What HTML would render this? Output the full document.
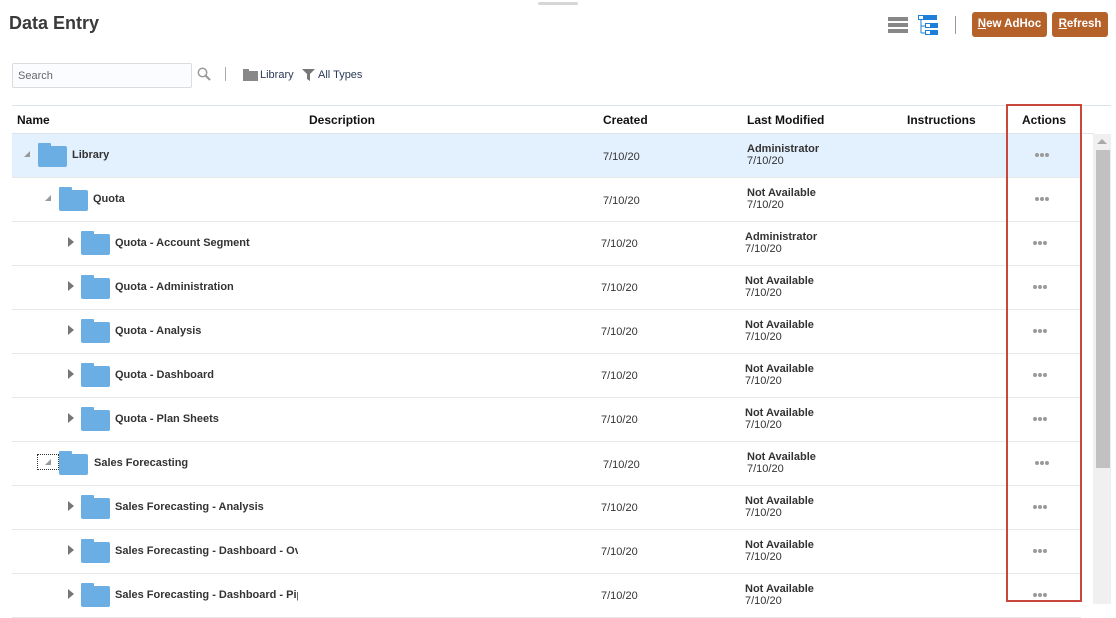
<!DOCTYPE html>
<html><head><meta charset="utf-8"><style>
*{margin:0;padding:0;box-sizing:border-box}
body{width:1116px;height:604px;overflow:hidden;background:#fff;font-family:"Liberation Sans",Arial,sans-serif;color:#333;position:relative}
.a{position:absolute}
.row{position:absolute;left:12px;width:1069px;height:44px;border-bottom:1px solid #e8e8e8}
.nm{position:absolute;font-size:11px;font-weight:bold;color:#333;white-space:nowrap;overflow:hidden}
.fd{position:absolute;width:29px;height:24px}
.fd i{position:absolute;left:0;top:0;width:13px;height:4px;background:#6aaee3;border-radius:1px 1px 0 0}
.fd b{position:absolute;left:0;top:3px;width:29px;height:21px;background:#6aaee3;border-radius:2px}
.cr{position:absolute;font-size:11px;color:#333}
.lm{position:absolute;font-size:11px;line-height:12px;color:#333}
.lm span{font-weight:bold;display:block}
.dots{position:absolute;width:18px;height:4px}
.dots::before{content:"";position:absolute;left:0;top:0;width:4px;height:4px;border-radius:2px;background:#9a9a9a;box-shadow:5px 0 0 #9a9a9a,10px 0 0 #9a9a9a}
.tri{position:absolute;width:0;height:0}
.tr{border-top:5px solid transparent;border-bottom:5px solid transparent;border-left:6px solid #777}
.td{border-left:6px solid transparent;border-bottom:6px solid #999}
.btn{position:absolute;top:12px;height:25px;background:#b4612a;color:#fff;font-size:11.5px;font-weight:bold;border-radius:3px;text-align:center;line-height:25px}
.hd{position:absolute;top:113px;font-size:12px;font-weight:bold;color:#111}
</style></head><body>
<div class="a" style="left:538px;top:2px;width:40px;height:3px;background:#d6d6d6;border-radius:2px"></div>
<div class="a" style="left:9px;top:13px;font-size:18px;font-weight:bold;color:#3a3a3a">Data Entry</div>
<div class="a" style="left:888px;top:17px;width:20px;height:4px;background:#888"></div>
<div class="a" style="left:888px;top:23px;width:20px;height:4px;background:#888"></div>
<div class="a" style="left:888px;top:29px;width:20px;height:4px;background:#888"></div>
<svg class="a" style="left:918px;top:15px" width="22" height="21"><rect x="0.5" y="0.5" width="5" height="4" fill="#fff" stroke="#1e7fd6"/><rect x="6" y="0" width="13" height="5" fill="#1e7fd6"/><path d="M3 5V18M3 11H7M3 18H7" stroke="#1e7fd6" fill="none"/><rect x="7.5" y="8.5" width="5" height="4" fill="#fff" stroke="#1e7fd6"/><rect x="13" y="8" width="7" height="5" fill="#1e7fd6"/><rect x="7.5" y="15.5" width="5" height="4" fill="#fff" stroke="#1e7fd6"/><rect x="13" y="15" width="7" height="5" fill="#1e7fd6"/></svg>
<div class="a" style="left:955px;top:16px;width:1px;height:18px;background:#999"></div>
<div class="btn" style="left:972px;width:75px"><u>N</u>ew AdHoc</div>
<div class="btn" style="left:1052px;width:56px"><u>R</u>efresh</div>
<div class="a" style="left:12px;top:63px;width:180px;height:25px;border:1px solid #dcdcdc;background:#fafcff;border-radius:2px;font-size:11px;color:#666;padding:6px 5px">Search</div>
<svg class="a" style="left:197px;top:67px" width="15" height="15"><circle cx="5.5" cy="5.5" r="4.2" fill="none" stroke="#999" stroke-width="1.5"/><path d="M8.5 8.5L13 13" stroke="#999" stroke-width="2"/></svg>
<div class="a" style="left:225px;top:67px;width:1px;height:14px;background:#aaa"></div>
<svg class="a" style="left:243px;top:69px" width="15" height="12"><rect x="0" y="0" width="6" height="3" fill="#888"/><rect x="0" y="2" width="15" height="10" fill="#888"/></svg>
<div class="a" style="left:260px;top:69px;font-size:11px;color:#2a3a55">Library</div>
<svg class="a" style="left:302px;top:69px" width="13" height="12"><path d="M0 0H13L8 5V12L5 10V5Z" fill="#777"/></svg>
<div class="a" style="left:318px;top:69px;font-size:11px;color:#2a3a55">All Types</div>
<div class="a" style="left:12px;top:105px;width:1099px;height:1px;background:#dde3ea"></div>
<div class="a" style="left:12px;top:133px;width:1082px;height:1px;background:#dde3ea"></div>
<div class="hd" style="left:17px">Name</div>
<div class="hd" style="left:309px">Description</div>
<div class="hd" style="left:603px">Created</div>
<div class="hd" style="left:747px">Last Modified</div>
<div class="hd" style="left:907px">Instructions</div>
<div class="hd" style="left:1022px">Actions</div>

<div class="row" style="top:134px;background:#e3f0fd"></div>
<div class="tri td" style="left:24px;top:151px"></div>
<div class="fd" style="left:38px;top:143px"><i></i><b></b></div>
<div class="nm" style="left:72px;top:149px">Library</div>
<div class="cr" style="left:603px;top:151px">7/10/20</div>
<div class="lm" style="left:747px;top:143px"><span>Administrator</span>7/10/20</div>
<div class="dots" style="left:1035px;top:153px"></div>

<div class="row" style="top:178px"></div>
<div class="tri td" style="left:45px;top:195px"></div>
<div class="fd" style="left:59px;top:187px"><i></i><b></b></div>
<div class="nm" style="left:93px;top:193px">Quota</div>
<div class="cr" style="left:603px;top:195px">7/10/20</div>
<div class="lm" style="left:747px;top:187px"><span>Not Available</span>7/10/20</div>
<div class="dots" style="left:1035px;top:197px"></div>

<div class="row" style="top:222px"></div>
<div class="tri tr" style="left:68px;top:237px"></div>
<div class="fd" style="left:81px;top:231px"><i></i><b></b></div>
<div class="nm" style="left:115px;top:237px">Quota - Account Segment</div>
<div class="cr" style="left:601px;top:238px">7/10/20</div>
<div class="lm" style="left:745px;top:231px"><span>Administrator</span>7/10/20</div>
<div class="dots" style="left:1033px;top:241px"></div>

<div class="row" style="top:266px"></div>
<div class="tri tr" style="left:68px;top:281px"></div>
<div class="fd" style="left:81px;top:275px"><i></i><b></b></div>
<div class="nm" style="left:115px;top:281px">Quota - Administration</div>
<div class="cr" style="left:601px;top:282px">7/10/20</div>
<div class="lm" style="left:745px;top:275px"><span>Not Available</span>7/10/20</div>
<div class="dots" style="left:1033px;top:285px"></div>

<div class="row" style="top:310px"></div>
<div class="tri tr" style="left:68px;top:325px"></div>
<div class="fd" style="left:81px;top:319px"><i></i><b></b></div>
<div class="nm" style="left:115px;top:325px">Quota - Analysis</div>
<div class="cr" style="left:601px;top:326px">7/10/20</div>
<div class="lm" style="left:745px;top:319px"><span>Not Available</span>7/10/20</div>
<div class="dots" style="left:1033px;top:329px"></div>

<div class="row" style="top:354px"></div>
<div class="tri tr" style="left:68px;top:369px"></div>
<div class="fd" style="left:81px;top:363px"><i></i><b></b></div>
<div class="nm" style="left:115px;top:369px">Quota - Dashboard</div>
<div class="cr" style="left:601px;top:370px">7/10/20</div>
<div class="lm" style="left:745px;top:363px"><span>Not Available</span>7/10/20</div>
<div class="dots" style="left:1033px;top:373px"></div>

<div class="row" style="top:398px"></div>
<div class="tri tr" style="left:68px;top:413px"></div>
<div class="fd" style="left:81px;top:407px"><i></i><b></b></div>
<div class="nm" style="left:115px;top:413px">Quota - Plan Sheets</div>
<div class="cr" style="left:601px;top:414px">7/10/20</div>
<div class="lm" style="left:745px;top:407px"><span>Not Available</span>7/10/20</div>
<div class="dots" style="left:1033px;top:417px"></div>

<div class="row" style="top:442px"></div>
<div class="a" style="left:37px;top:454px;width:22px;height:16px;border:1px dotted #333"></div>
<div class="tri td" style="left:45px;top:459px"></div>
<div class="fd" style="left:59px;top:451px"><i></i><b></b></div>
<div class="nm" style="left:94px;top:457px">Sales Forecasting</div>
<div class="cr" style="left:603px;top:459px">7/10/20</div>
<div class="lm" style="left:747px;top:451px"><span>Not Available</span>7/10/20</div>
<div class="dots" style="left:1035px;top:461px"></div>

<div class="row" style="top:486px"></div>
<div class="tri tr" style="left:68px;top:501px"></div>
<div class="fd" style="left:81px;top:495px"><i></i><b></b></div>
<div class="nm" style="left:115px;top:501px">Sales Forecasting - Analysis</div>
<div class="cr" style="left:601px;top:502px">7/10/20</div>
<div class="lm" style="left:745px;top:495px"><span>Not Available</span>7/10/20</div>
<div class="dots" style="left:1033px;top:505px"></div>

<div class="row" style="top:530px"></div>
<div class="tri tr" style="left:68px;top:545px"></div>
<div class="fd" style="left:81px;top:539px"><i></i><b></b></div>
<div class="nm" style="left:115px;top:545px;width:183px">Sales Forecasting - Dashboard - Overview</div>
<div class="cr" style="left:601px;top:546px">7/10/20</div>
<div class="lm" style="left:745px;top:539px"><span>Not Available</span>7/10/20</div>
<div class="dots" style="left:1033px;top:549px"></div>

<div class="row" style="top:574px"></div>
<div class="tri tr" style="left:68px;top:589px"></div>
<div class="fd" style="left:81px;top:583px"><i></i><b></b></div>
<div class="nm" style="left:115px;top:589px;width:183px">Sales Forecasting - Dashboard - Pipeline</div>
<div class="cr" style="left:601px;top:590px">7/10/20</div>
<div class="lm" style="left:745px;top:583px"><span>Not Available</span>7/10/20</div>
<div class="dots" style="left:1033px;top:593px"></div>

<div class="a" style="left:1093px;top:134px;width:18px;height:470px;background:#f0f0f0"></div>
<div class="a" style="left:1097px;top:139px;width:0;height:0;border-left:5px solid transparent;border-right:5px solid transparent;border-bottom:5px solid #aaa"></div>
<div class="a" style="left:1096px;top:150px;width:14px;height:318px;background:#c1c1c1"></div>
<div class="a" style="left:1006px;top:104px;width:76px;height:498px;border:2px solid #c9463a"></div>
</body></html>
